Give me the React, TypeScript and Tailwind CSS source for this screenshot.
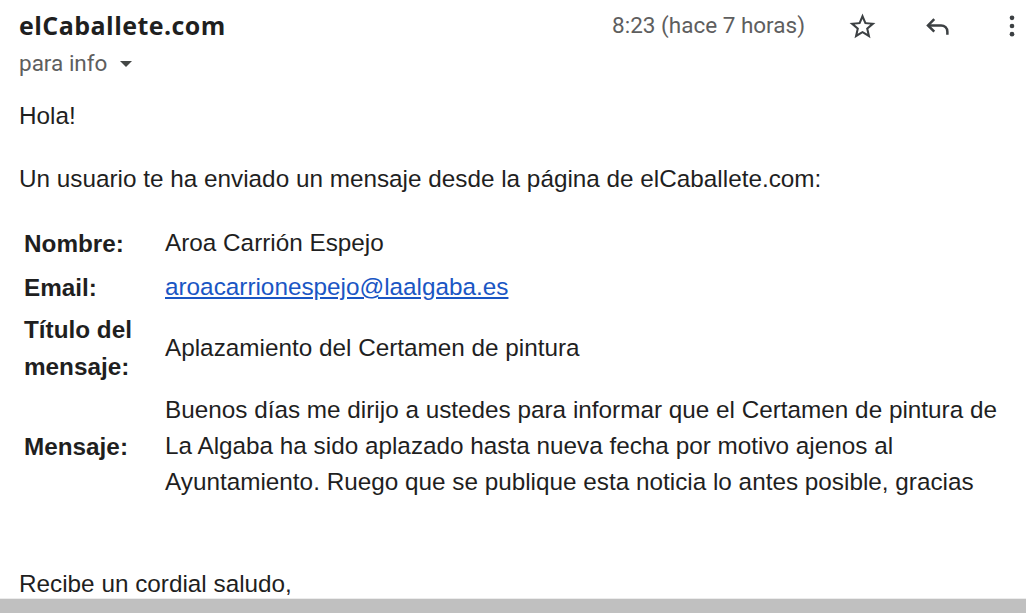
import React from 'react'

const StarIcon = () => (
  <svg width="31" height="31" viewBox="0 0 24 24" fill="#3c4043">
    <path d="M22 9.24l-7.19-.62L12 2 9.19 8.63 2 9.24l5.46 4.73L5.82 21 12 17.27 18.18 21l-1.63-7.03L22 9.24zM12 15.4l-3.76 2.27 1-4.28-3.32-2.88 4.38-.38L12 6.1l1.71 4.04 4.38.38-3.32 2.88 1 4.28L12 15.4z" />
  </svg>
)

const ReplyIcon = () => (
  <svg width="30" height="30" viewBox="0 0 24 24" fill="none" stroke="#3c4043" strokeWidth="2">
    <path d="M9 6.5 L4 11.5 L9 16.5" />
    <path d="M4 11.5 H14.5 a5 5 0 0 1 5 5 V19" />
  </svg>
)

const DotsIcon = () => (
  <svg width="28" height="28" viewBox="0 0 24 24" fill="#3c4043">
    <circle cx="12" cy="5" r="2" />
    <circle cx="12" cy="12" r="2" />
    <circle cx="12" cy="19" r="2" />
  </svg>
)

const rows = [
  { label: "Nombre:", value: "Aroa Carrión Espejo", h: "h-[44px]" },
  { label: "Email:", value: "aroacarrionespejo@laalgaba.es", link: true, h: "h-[44px]" },
  { label: "Título del mensaje:", value: "Aplazamiento del Certamen de pintura", h: "h-[77px]" },
  {
    label: "Mensaje:",
    value: "Buenos días me dirijo a ustedes para informar que el Certamen de pintura de La Algaba ha sido aplazado hasta nueva fecha por motivo ajenos al Ayuntamiento. Ruego que se publique esta noticia lo antes posible, gracias",
    h: "h-[120px]",
  },
]

const App = () => {
  return (
    <div className="w-[1026px] h-[613px] overflow-hidden bg-white flex flex-col">
      <div className="flex-1 pl-[19px] overflow-hidden">
        <div className="flex items-center h-[52px]">
          <div className="flex-1 text-[25px] tracking-[0.45px] font-bold text-[#1f1f1f] font-['Open_Sans',sans-serif]">elCaballete.com</div>
          <div className="text-[22.5px] text-[#5e5e5e] font-['Roboto',sans-serif] mr-[42px]">8:23 (hace 7 horas)</div>
          <div className="flex items-center gap-[45px]">
            <StarIcon />
            <ReplyIcon />
            <DotsIcon />
          </div>
        </div>
        <div className="flex items-center h-[24px] gap-[13px] text-[22.5px] text-[#5e5e5e] font-['Roboto',sans-serif]">
          <span>para info</span>
          <span className="w-0 h-0 border-l-[6px] border-r-[6px] border-t-[6px] border-l-transparent border-r-transparent border-t-[#444746]" />
        </div>

        <div className="font-['Liberation_Sans',Arial,sans-serif] text-[24.3px] leading-[36px] text-[#1f1f1f]">
          <p className="mt-[22px]">Hola!</p>
          <p className="mt-[27px]">Un usuario te ha enviado un mensaje desde la página de elCaballete.com:</p>

          <div className="mt-[24px] grid grid-cols-[146px_845px]">
            {rows.map((r) => (
              <React.Fragment key={r.label}>
                <div className={`${r.h} pl-[5px] font-bold flex items-center leading-[37px]`}>{r.label}</div>
                <div className={`${r.h} flex items-center`}>
                  {r.link ? (
                    <a href="#" className="text-[#1a56c4] underline">{r.value}</a>
                  ) : (
                    <span>{r.value}</span>
                  )}
                </div>
              </React.Fragment>
            ))}
          </div>

          <p className="mt-[60px]">Recibe un cordial saludo,</p>
        </div>
      </div>
      <div className="h-[15px] bg-[#c0c0c0] border-t border-[#ececec] shrink-0" />
    </div>
  )
}

export default App
